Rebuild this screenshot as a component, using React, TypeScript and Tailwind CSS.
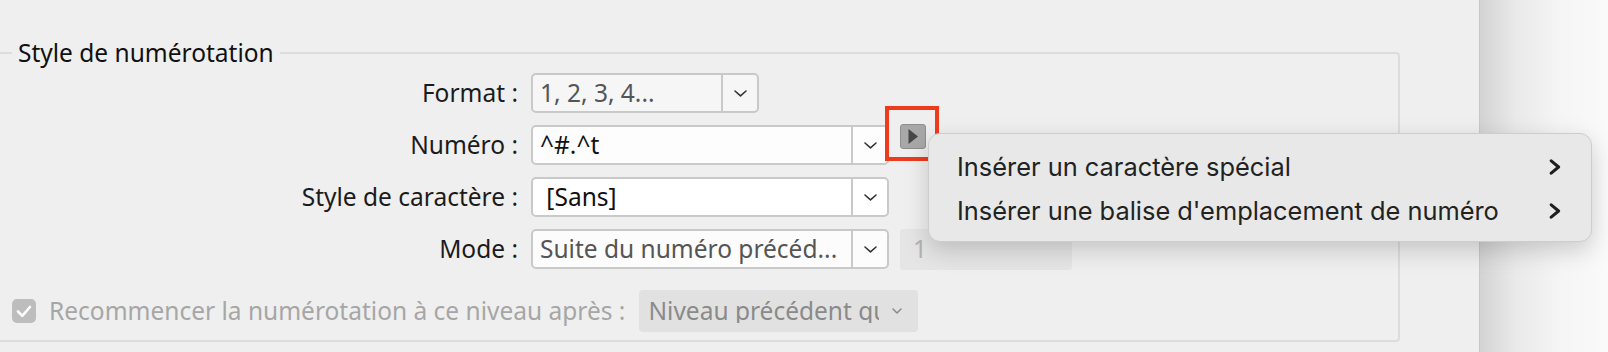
import React from 'react';

function Chevron({ color = '#333' }: { color?: string }) {
  return (
    <svg width="13" height="7" viewBox="0 0 13 7" fill="none">
      <polyline points="1,1 6.5,5.8 12,1" stroke={color} strokeWidth="1.6" strokeLinecap="round" strokeLinejoin="round" />
    </svg>
  );
}

function MenuArrow() {
  return (
    <svg width="12" height="16" viewBox="0 0 12 16" fill="none">
      <polyline points="2.2,1.8 9.6,8 2.2,14.2" stroke="#1e1e1e" strokeWidth="3" strokeLinecap="round" strokeLinejoin="round" />
    </svg>
  );
}

interface ComboProps {
  value: string;
  width: string;
  bg: string;
  textColor: string;
}

function Combo({ value, width, bg, textColor }: ComboProps) {
  return (
    <div className={`flex h-[40px] ${width} ${bg} border-2 border-[#c9c9c9] rounded-[5px] overflow-hidden`}>
      <div className={`flex-1 flex items-center pl-[7px] whitespace-pre ${textColor}`}>{value}</div>
      <div className="w-[36px] flex items-center justify-center border-l-2 border-[#c9c9c9]">
        <Chevron />
      </div>
    </div>
  );
}

function Row({ label, children }: { label: string; children: React.ReactNode }) {
  return (
    <div className="flex items-center gap-[13px] h-[40px]">
      <div className="w-[526px] text-right text-[#1b1b1b] whitespace-pre">{label}</div>
      {children}
    </div>
  );
}

export default function App() {
  return (
    <div className="relative flex w-[1608px] h-[352px] overflow-hidden bg-[#f9f9f9] font-['Noto_Sans',sans-serif] text-[24.5px] leading-none">
      {/* dialog panel */}
      <div className="w-[1480px] h-full shrink-0 bg-[#efefef] border-r border-[#c8c8c8]">
        <fieldset className="-ml-[10px] mt-[38px] w-[1410px] h-[304px] border-2 border-[#dcdcdc] rounded-[4px] px-0 pt-[5px] pb-0">
          <legend className="ml-[20px] px-[6px] leading-[30px] text-[#111]">Style de numérotation</legend>

          <div className="flex flex-col gap-[12px]">
            <Row label="Format :">
              <Combo value="1, 2, 3, 4..." width="w-[228px]" bg="bg-[#f6f6f6]" textColor="text-[#555]" />
            </Row>

            <Row label="Numéro :">
              <Combo value="^#.^t" width="w-[358px]" bg="bg-[#fdfdfd]" textColor="text-[#111]" />
              <div className="relative self-start -mt-px ml-[-2px]">
                <div className="w-[26px] h-[25px] rounded-[3px] bg-[#a8a8a8] border border-[#8e8e8e] flex items-center justify-center">
                  <svg width="10" height="15" viewBox="0 0 10 15">
                    <polygon points="0.5,0 10,7.5 0.5,15" fill="#474747" />
                  </svg>
                </div>
                <div className="absolute -left-[15px] -top-[18px] w-[54px] h-[55px] border-4 border-[#ee3b1e]" />
              </div>
            </Row>

            <Row label="Style de caractère :">
              <Combo value=" [Sans]" width="w-[358px]" bg="bg-white" textColor="text-[#111]" />
            </Row>

            <Row label="Mode :">
              <Combo value="Suite du numéro précéd..." width="w-[358px]" bg="bg-[#fcfcfc]" textColor="text-[#555]" />
              <div className="ml-[-2px] w-[172px] h-[41px] rounded-[3px] bg-[#e5e5e5] flex items-center pl-[13px] text-[#b3b3b3]">1</div>
            </Row>
          </div>

          <div className="flex items-center mt-[21px] ml-[20px] h-[42px]">
            <div className="w-[24px] h-[24px] rounded-[5px] bg-[#bdbdbd] flex items-center justify-center">
              <svg width="24" height="24" viewBox="0 0 24 24" fill="none">
                <polyline points="6,12.5 10.3,16.8 18,8" stroke="#fff" strokeWidth="2.6" strokeLinecap="round" strokeLinejoin="round" />
              </svg>
            </div>
            <span className="ml-[13px] text-[#a6a6a6] whitespace-pre">Recommencer la numérotation à ce niveau après :</span>
            <div className="ml-[14px] w-[279px] h-[42px] rounded-[4px] bg-[#e1e1e1] flex items-center">
              <div className="w-[240px] pl-[9px] overflow-hidden whitespace-nowrap text-[#8a8a8a]">Niveau précédent quelconque</div>
              <div className="flex-1 flex items-center justify-center pr-[4px]">
                <svg width="10" height="6" viewBox="0 0 10 6" fill="none">
                  <polyline points="1,1 5,5 9,1" stroke="#8a8a8a" strokeWidth="1.5" strokeLinecap="round" strokeLinejoin="round" />
                </svg>
              </div>
            </div>
          </div>
        </fieldset>
      </div>

      {/* shadow of the dialog on the backdrop */}
      <div className="flex-1 h-full bg-[linear-gradient(to_right,#d3d3d3,#e9e9e9_35px,#f5f5f5_80px,#fafafa)]" />

      {/* context menu */}
      <div className="absolute left-[928px] top-[133px] w-[664px] h-[109px] rounded-[12px] bg-[#e8e8e8] border border-[#cdcdcd] shadow-[0_8px_24px_rgba(0,0,0,0.18)] pt-[11px] pl-[28px] pr-[30px] font-['Inter',sans-serif] text-[25.4px] text-[#222]">
        <div className="flex items-center justify-between h-[44px]">
          <span>Insérer un caractère spécial</span>
          <MenuArrow />
        </div>
        <div className="flex items-center justify-between h-[44px]">
          <span>Insérer une balise d'emplacement de numéro</span>
          <MenuArrow />
        </div>
      </div>
    </div>
  );
}
